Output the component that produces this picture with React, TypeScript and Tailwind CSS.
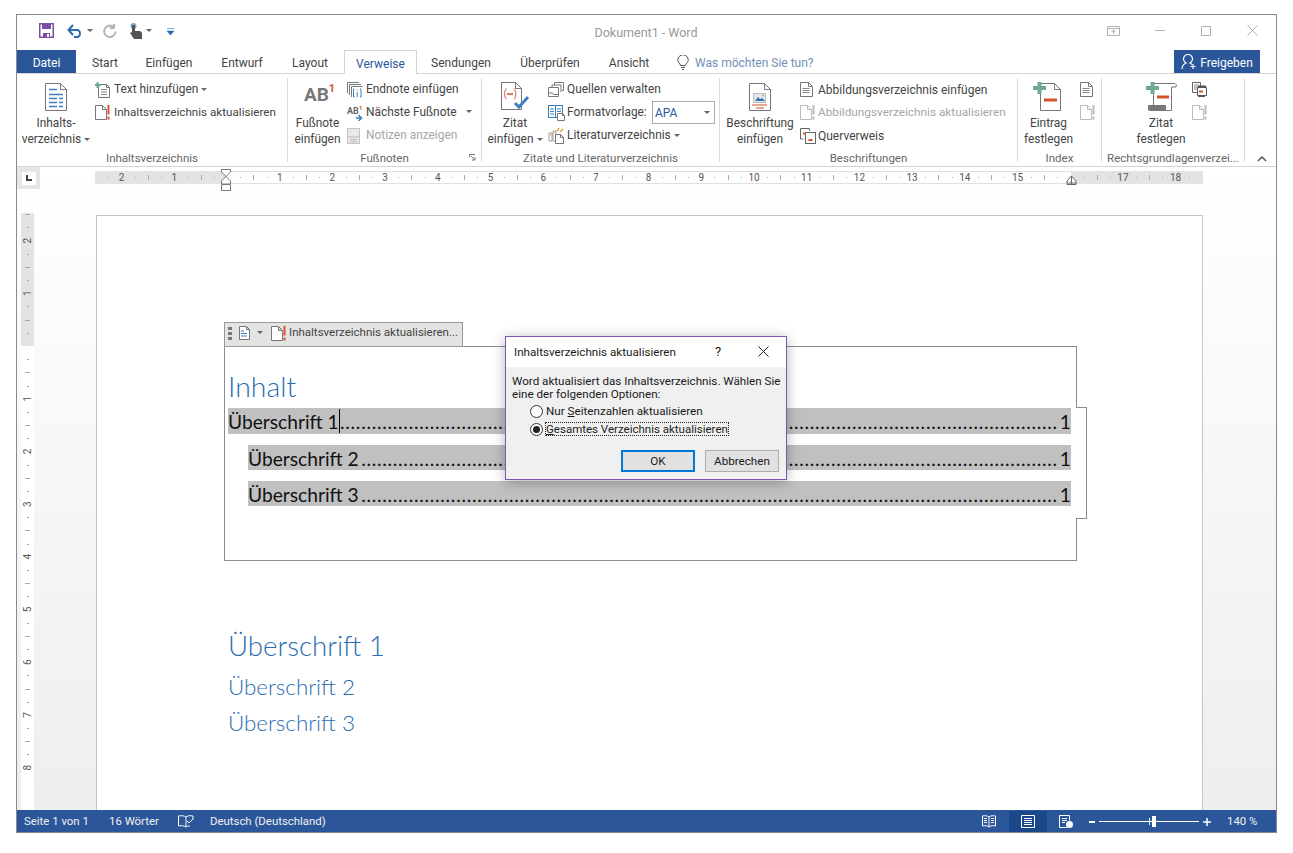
import { ReactNode } from "react";

const CM = 52.7;
const BLUE = "#3d7ebf";
const RED = "#d9512c";
const GREEN = "#6fa992";
const GRAY = "#777";

const Caret = ({ color = "#666" }: { color?: string }) => (
  <svg width="6" height="4" viewBox="0 0 6 4" className="ml-[3px] inline-block shrink-0 align-middle">
    <path d="M0 0h6L3 3z" fill={color} />
  </svg>
);

// page outline with folded corner, shared by most ribbon icons
const Page = ({ x = 0.5, y = 0.5, w, h, stroke = GRAY, fold = 5 }: { x?: number; y?: number; w: number; h: number; stroke?: string; fold?: number }) => (
  <path
    d={`M${x} ${y}h${w - fold}l${fold} ${fold}v${h - fold}h-${w}zM${x + w - fold} ${y}v${fold}h${fold}`}
    fill="#fff"
    stroke={stroke}
  />
);

const TocLarge = () => (
  <svg width="22" height="28" viewBox="0 0 22 28">
    <Page w={21} h={27} fold={6} />
    <path d="M4 6.5h8M4 11.5h14M4 15.5h8M14 15.5h4M4 19.5h8M14 19.5h4M4 23.5h8M14 23.5h4" stroke={BLUE} strokeWidth="1.4" />
  </svg>
);

const TextAdd = () => (
  <svg width="16" height="16" viewBox="0 0 16 16">
    <Page x={3.5} y={2.5} w={11} h={13} fold={3} />
    <path d="M6 7.5h6M6 10h6M6 12.5h6" stroke="#888" />
    <path d="M2.5 0v6M0 3h6" stroke={GREEN} strokeWidth="2" />
  </svg>
);

const UpdateIcon = ({ muted = false }: { muted?: boolean }) => (
  <svg width="16" height="15" viewBox="0 0 16 15">
    <Page w={11} h={14} fold={4} stroke={muted ? "#bbb" : GRAY} />
    <path d="M13.5 0v9.5M13.5 11.5v3" stroke={muted ? "#bbb" : RED} strokeWidth="2" />
  </svg>
);

const Endnote = () => (
  <svg width="16" height="16" viewBox="0 0 16 16">
    <path d="M.5 11V.5H12M2.5 13V2.500H14M4.500 15V4.500H15.500" fill="none" stroke="#777" />
    <path d="M7.500 7H6.500v8H7.500M13 7h1v8h-1M10.200 7.500v1M10.200 10v5" fill="none" stroke={BLUE} />
  </svg>
);

const NextNote = () => (
  <svg width="17" height="16" viewBox="0 0 17 16">
    <text x="0" y="9" fontSize="9" fontWeight="700" fill="#666" fontFamily="Roboto, sans-serif">AB</text>
    <text x="12" y="5" fontSize="6" fontWeight="700" fill={RED} fontFamily="Roboto, sans-serif">1</text>
    <path d="M9 13h5M11.500 10l3 3-3 3" fill="none" stroke={BLUE} strokeWidth="1.500" />
  </svg>
);

const NotesIcon = () => (
  <svg width="14" height="16" viewBox="0 0 14 16">
    <rect x=".5" y=".5" width="12" height="15" fill="#e8e8e8" stroke="#c4c4c4" />
    <path d="M.5 9h12M3 11.500h7M3 13.500h7" stroke="#bdbdbd" />
  </svg>
);

const CiteInsert = () => (
  <svg width="29" height="29" viewBox="0 0 29 29">
    <Page w={20} h={27} fold={6} />
    <text x="2.500" y="15" fontSize="10" fill={RED} fontFamily="Roboto, sans-serif">(</text>
    <text x="12.500" y="15" fontSize="10" fill={RED} fontFamily="Roboto, sans-serif">)</text>
    <path d="M6 12h6" stroke={RED} strokeWidth="1.500" />
    <path d="M14 21l4 4 9-10" fill="none" stroke="#3f7fc1" strokeWidth="3" />
  </svg>
);

const Sources = () => (
  <svg width="16" height="16" viewBox="0 0 16 16">
    <path d="M6.500 3V.5h9v8H14M4 5.500V3h9v7" fill="none" stroke="#777" />
    <path d="M.5 5.500h10v9H.5zM.5 11h4l1 1.500h5" fill="#fff" stroke="#777" />
  </svg>
);

const StyleIcon = () => (
  <svg width="17" height="16" viewBox="0 0 17 16">
    <rect x=".5" y=".5" width="14" height="12" fill="#fff" stroke={BLUE} />
    <path d="M7.500 1v11M2 4h4M2 6.500h4M2 9h4M9 4h4M9 6.500h4" stroke={BLUE} />
    <Page x={9.500} y={8.500} w={7} h={7} fold={2} />
  </svg>
);

const Biblio = () => (
  <svg width="16" height="16" viewBox="0 0 16 16">
    <path d="M1 5h3v8H1zM5 3h3v10H5z" fill="#fff" stroke="#888" strokeWidth=".8" />
    <path d="M9 3l2-3M12 4l3-3" stroke="#d8a640" strokeWidth="1.500" />
    <path d="M2 7h1M6 5h1" stroke="#d8a640" />
    <Page x={7.500} y={6.500} w={8} h={9} fold={3} />
  </svg>
);

const CaptionLarge = () => (
  <svg width="22" height="28" viewBox="0 0 22 28">
    <Page w={21} h={27} fold={6} />
    <rect x="4.500" y="10.500" width="12" height="9" fill="#dfe9f3" stroke="#bbb" />
    <path d="M6 18l3-4 2 2 2-1 3 3z" fill="#3c6ea8" />
    <circle cx="14" cy="12.500" r="1" fill="#e0a93b" />
    <path d="M3 22h15M7 25h8" stroke={RED} strokeWidth="1.200" />
  </svg>
);

const ListIcon = ({ stroke = GRAY }: { stroke?: string }) => (
  <svg width="13" height="15" viewBox="0 0 13 15">
    <Page w={12} h={14} fold={4} stroke={stroke} />
    <path d="M2.500 6.500h7M2.500 8.500h7M2.500 10.500h7" stroke="#888" />
  </svg>
);

const CrossRef = () => (
  <svg width="16" height="16" viewBox="0 0 16 16">
    <path d="M9.500 3V.5H.5V11h3" fill="none" stroke="#666" />
    <rect x="5.500" y="4.500" width="10" height="11" fill="#fff" stroke="#666" />
    <path d="M3 5.500h3M8.500 12h4" stroke={RED} strokeWidth="2" />
  </svg>
);

const EntryLarge = () => (
  <svg width="32" height="29" viewBox="0 0 32 29">
    <Page x={7.500} y={1.500} w={20} h={27} fold={6} />
    <path d="M6.500 0v12M0 6h13" stroke={GREEN} strokeWidth="4" />
    <path d="M11 18h13" stroke={RED} strokeWidth="3" />
  </svg>
);

const ScrollLarge = () => (
  <svg width="31" height="29" viewBox="0 0 31 29">
    <path d="M7.500 23V1.500H29a2.500 2.500 0 0 1 1 3.500h-4.500V28.500H14" fill="#fff" stroke={GRAY} />
    <path d="M2 23h18v4a2 2 0 0 1-2 2H4a2 2 0 0 1-2-2z" fill="#777" />
    <path d="M6.500 0v12M0 6h13" stroke={GREEN} strokeWidth="4" />
    <path d="M11 15h12" stroke={RED} strokeWidth="3" />
  </svg>
);

const CiteMark = () => (
  <svg width="15" height="15" viewBox="0 0 15 15">
    <path d="M.5.5h8v10H.5z" fill="#fff" stroke="#666" />
    <path d="M2 3h5M2 5h5M2 7h5" stroke="#888" />
    <path d="M5.500 5.500h9v8h-9z" fill="#fff" stroke="#555" />
    <path d="M6 3.500h8v2H6z" fill="#555" />
    <path d="M7 9.500h4" stroke={RED} strokeWidth="2" />
    <path d="M6 13h7v2H6z" fill="#555" />
  </svg>
);

const Large = ({ icon, lines, w, caret, className = "" }: { icon: ReactNode; lines: string[]; w: string; caret?: boolean; className?: string }) => (
  <div className={`flex shrink-0 flex-col items-center ${w} ${className}`}>
    <div className="flex h-[37px] items-center justify-center">{icon}</div>
    {lines.map((line, i) => (
      <div key={line} className="whitespace-nowrap text-center leading-[16px]">
        {line}
        {caret && i === lines.length - 1 && <Caret />}
      </div>
    ))}
  </div>
);

const Row = ({ icon, children, iconW, muted }: { icon: ReactNode; children: ReactNode; iconW: string; muted?: boolean }) => (
  <div className={`flex h-[23px] items-center whitespace-nowrap ${muted ? "text-[#a6a6a6]" : ""}`}>
    <div className={`flex shrink-0 items-center ${iconW}`}>{icon}</div>
    {children}
  </div>
);

const Group = ({ label, w, children }: { label: string; w: string; children: ReactNode }) => (
  <div className={`relative flex h-full shrink-0 flex-col border-r border-[#dadada] ${w}`}>
    <div className="flex h-[72px]">{children}</div>
    <div className="h-[12px] whitespace-nowrap text-center text-[11.500px] leading-[16px] text-[#666]">{label}</div>
  </div>
);

const TABS = [
  { label: "Start", cls: "w-[54px] ml-[2px]" },
  { label: "Einfügen", cls: "w-[74px]" },
  { label: "Entwurf", cls: "w-[72px]" },
  { label: "Layout", cls: "w-[64px] mr-[2px]" },
];

const TABS_AFTER = [
  { label: "Sendungen", cls: "w-[88px]" },
  { label: "Überprüfen", cls: "w-[90px]" },
  { label: "Ansicht", cls: "w-[68px]" },
];

const HorizontalRuler = () => {
  const nums = Array.from({ length: 21 }, (_, i) => i - 2).filter((n) => n !== 0 && n !== 16);
  const ticks = Array.from({ length: 84 }, (_, i) => i - 10).filter((t) => t % 4 !== 0);
  return (
    <svg width="1108" height="13" viewBox="0 0 1108 13" className="block">
      <rect width="1108" height="13" fill="#fff" />
      <path d="M132 .5H976M132 12.500H976" stroke="#e0e0e0" />
      <rect width="132" height="13" fill="#e3e3e3" />
      <rect x="976" width="132" height="13" fill="#e3e3e3" />
      {ticks
        .filter((t) => 132 + (t * CM) / 4 > 2 && 132 + (t * CM) / 4 < 1104)
        .map((t) => {
          const x = 132 + (t * CM) / 4;
          return Math.abs(t % 4) === 2 ? (
            <rect key={t} x={Math.round(x)} y="4" width="1" height="5" fill="#aaa" />
          ) : (
            <rect key={t} x={Math.round(x)} y="6" width="1" height="1" fill="#aaa" />
          );
        })}
      {nums.map((n) => (
        <text key={n} x={132 + n * CM} y="10" textAnchor="middle" fontSize="10" fill="#555" fontFamily="Roboto, sans-serif">
          {Math.abs(n)}
        </text>
      ))}
    </svg>
  );
};

const VerticalRuler = () => {
  const nums = [-2, -1, 1, 2, 3, 4, 5, 6, 7, 8];
  const ticks = Array.from({ length: 42 }, (_, i) => i - 10).filter((t) => t % 4 !== 0);
  return (
    <svg width="13" height="597" viewBox="0 0 13 597" className="block shrink-0">
      <rect width="13" height="597" fill="#fff" />
      <rect width="13" height="133" fill="#e3e3e3" />
      {ticks.map((t) => {
        const y = Math.round(133 + (t * CM) / 4);
        return Math.abs(t % 4) === 2 ? (
          <rect key={t} x="4" y={y} width="5" height="1" fill="#aaa" />
        ) : (
          <rect key={t} x="6" y={y} width="2" height="1" fill="#aaa" />
        );
      })}
      {nums.map((n) => {
        const y = 133 + n * CM;
        return (
          <text key={n} x="6.500" y={y + 3.500} textAnchor="middle" fontSize="10" fill="#555" fontFamily="Roboto, sans-serif" transform={`rotate(-90 6.500 ${y})`}>
            {Math.abs(n)}
          </text>
        );
      })}
    </svg>
  );
};

const TocRow = ({ label, cls, cursor, dots }: { label: string; cls: string; cursor?: boolean; dots: number }) => (
  <div className={`flex items-center whitespace-nowrap bg-[#c0c0c0] pt-[3px] text-[19.200px] text-[#111] ${cls}`}>
    <span>{label}</span>
    {cursor && <span className="mt-[-3px] h-[24px] w-px bg-black" />}
    <span className="min-w-0 flex-1 text-right tracking-[0.750px]">{".".repeat(dots)}</span>
    <span className="pl-[2px]">1</span>
  </div>
);

export default function App() {
  return (
    <div className="relative h-[853px] w-[1293px] overflow-hidden bg-white pl-[16px] pt-[14px] font-['Roboto',sans-serif] text-[11.900px] text-[#444]">
      <div className="flex h-[819px] w-[1261px] flex-col border border-[#8a8a8a] bg-white">
        {/* Title bar */}
        <div className="flex h-[35px] shrink-0 items-center">
          <div className="mt-[-4px] flex w-[500px] items-center">
            <svg width="15" height="15" viewBox="0 0 15 15" className="ml-[22px]">
              <path d="M.75.75h13.500v13.500H.75z" fill="#fff" stroke="#7b4fa3" strokeWidth="1.500" />
              <path d="M3 1h9v5H3zM4 10h7v4H4z" fill="#7b4fa3" />
              <path d="M8 11h2v3H8z" fill="#fff" />
            </svg>
            <svg width="17" height="14" viewBox="0 0 17 14" className="ml-[13px]">
              <path d="M2 6h9a4 4 0 0 1 0 7H7M6 1L1.500 6 6 11" fill="none" stroke="#2b6cb0" strokeWidth="2" />
            </svg>
            <Caret />
            <svg width="16" height="16" viewBox="0 0 16 16" className="ml-[9px]">
              <path d="M13.500 8.500a5.700 5.700 0 1 1-2-4.500M12 1v4H8" fill="none" stroke="#b5b5b5" strokeWidth="2" />
            </svg>
            <svg width="15" height="18" viewBox="0 0 15 18" className="ml-[10px]">
              <circle cx="5.500" cy="4" r="3" fill="#7fa9d4" />
              <path d="M4 3h3v6h4a3 3 0 0 1 3 3v5H6L2 11l2-1z" fill="#555" />
            </svg>
            <Caret />
            <svg width="7" height="8" viewBox="0 0 7 8" className="ml-[15px] mt-[2px]">
              <path d="M0 .5h7M0 3h7l-3.500 4z" fill="#2b6cb0" stroke="#2b6cb0" strokeWidth=".6" />
            </svg>
          </div>
          <div className="mt-[2px] w-[258px] text-center text-[12.500px] text-[#999]">Dokument1 - Word</div>
          <div className="ml-auto mt-[-4px] flex items-center">
            <svg width="13" height="10" viewBox="0 0 13 10" className="mr-[35px]">
              <path d="M.5.500h12v9H.5zM.5 2.500h12M6.500 8V4M4.500 6l2-2 2 2" fill="none" stroke="#b0b0b0" />
            </svg>
            <svg width="10" height="1" viewBox="0 0 10 1" className="mr-[36px]">
              <path d="M0 .5h10" stroke="#b0b0b0" />
            </svg>
            <svg width="10" height="10" viewBox="0 0 10 10" className="mr-[36px]">
              <path d="M.5.500h9v9h-9z" fill="none" stroke="#b0b0b0" />
            </svg>
            <svg width="11" height="11" viewBox="0 0 11 11" className="mr-[18px]">
              <path d="M.5.500l10 10M10.500.500l-10 10" stroke="#b0b0b0" />
            </svg>
          </div>
        </div>

        {/* Tabs */}
        <div className="flex h-[24px] shrink-0 items-stretch border-b border-[#d4d4d4] text-[12px] leading-[26px] text-[#444]">
          <div className="w-[59px] bg-[#2b579a] text-center text-white">Datei</div>
          {TABS.map((t) => (
            <div key={t.label} className={`text-center ${t.cls}`}>{t.label}</div>
          ))}
          <div className="z-10 -mb-px h-[24px] w-[73px] border-x border-t border-[#d4d4d4] bg-white text-center text-[#2b579a]">Verweise</div>
          {TABS_AFTER.map((t) => (
            <div key={t.label} className={`text-center ${t.cls}`}>{t.label}</div>
          ))}
          <div className="ml-[14px] flex items-center pt-[2px] text-[#6f8fb8]">
            <svg width="12" height="15" viewBox="0 0 12 15" className="mr-[6px]">
              <path d="M3.500 10.500C3 8 .8 7.500.8 5a5.200 5.200 0 0 1 10.400 0c0 2.500-2.200 3-2.700 5.500zM4 12.500h4M5 14.500h2" fill="none" stroke="#555" />
            </svg>
            Was möchten Sie tun?
          </div>
          <div className="ml-auto mr-[16px] flex w-[86px] items-center justify-center bg-[#2b579a] pt-[2px] text-white">
            <svg width="16" height="16" viewBox="0 0 16 16" className="mr-[3px] mt-[-2px]">
              <path d="M1 15c0-3 2-5 4-6a4.500 4.500 0 1 1 4 0c1 .5 1.500 1 2 1.500M12 10v5M9.500 12.500h5" fill="none" stroke="#fff" strokeWidth="1.200" />
            </svg>
            Freigeben
          </div>
        </div>

        {/* Ribbon */}
        <div className="relative flex h-[93px] shrink-0 border-b border-[#d4d4d4] pb-[4px] pt-[4px]">
          <Group label="Inhaltsverzeichnis" w="w-[271px]">
            <Large icon={<TocLarge />} lines={["Inhalts-", "verzeichnis"]} caret w="w-[78px]" />
            <div>
              <Row icon={<TextAdd />} iconW="w-[19px]">Text hinzufügen<Caret /></Row>
              <Row icon={<UpdateIcon />} iconW="w-[19px]"><span className="text-[11.650px]">Inhaltsverzeichnis aktualisieren</span></Row>
            </div>
          </Group>
          <Group label="Fußnoten" w="w-[194px]">
            <Large
              w="w-[59px]"
              lines={["Fußnote", "einfügen"]}
              icon={
                <span className="ml-[4px] mt-[-3px] flex items-start font-bold text-[#777]">
                  <span className="text-[19px] leading-[24px]">AB</span>
                  <span className="text-[11px] leading-[12px] text-[#d9512c]">1</span>
                </span>
              }
            />
            <div>
              <Row icon={<Endnote />} iconW="w-[19px]">Endnote einfügen</Row>
              <Row icon={<NextNote />} iconW="w-[19px]">
                Nächste Fußnote
                <span className="ml-[6px]"><Caret /></span>
              </Row>
              <Row icon={<NotesIcon />} iconW="w-[19px]" muted>Notizen anzeigen</Row>
            </div>
            <svg width="7" height="7" viewBox="0 0 7 7" className="absolute bottom-[1px] right-[5px]">
              <path d="M.5 3V.5H6M2 2l4 4M6 3v3H3" fill="none" stroke="#777" />
            </svg>
          </Group>
          <Group label="Zitate und Literaturverzeichnis" w="w-[238px]">
            <Large icon={<CiteInsert />} lines={["Zitat", "einfügen"]} caret w="w-[66px]" />
            <div>
              <Row icon={<Sources />} iconW="w-[19px]">Quellen verwalten</Row>
              <Row icon={<StyleIcon />} iconW="w-[19px]">
                <span className="w-[85px]">Formatvorlage:</span>
                <div className="flex h-[23px] w-[63px] items-center justify-between border border-[#ababab] pl-[2px] pr-[4px] text-[12px] text-[#2b579a]">
                  APA
                  <Caret />
                </div>
              </Row>
              <Row icon={<Biblio />} iconW="w-[19px]">Literaturverzeichnis<Caret /></Row>
            </div>
          </Group>
          <Group label="Beschriftungen" w="w-[298px]">
            <Large icon={<CaptionLarge />} lines={["Beschriftung", "einfügen"]} w="w-[80px]" />
            <div className="text-[12px]">
              <Row icon={<ListIcon />} iconW="w-[18px]">Abbildungsverzeichnis einfügen</Row>
              <Row icon={<UpdateIcon muted />} iconW="w-[18px]" muted><span className="text-[11.800px]">Abbildungsverzeichnis aktualisieren</span></Row>
              <Row icon={<CrossRef />} iconW="w-[18px]">Querverweis</Row>
            </div>
          </Group>
          <Group label="Index" w="w-[84px]">
            <Large icon={<EntryLarge />} lines={["Eintrag", "festlegen"]} w="w-[61px]" />
            <div className="ml-[1px]">
              <div className="flex h-[23px] items-center"><ListIcon /></div>
              <div className="flex h-[23px] items-center"><UpdateIcon muted /></div>
            </div>
          </Group>
          <Group label="Rechtsgrundlagenverzei..." w="w-[143px]">
            <Large icon={<ScrollLarge />} lines={["Zitat", "festlegen"]} w="w-[62px]" className="ml-[28px]" />
            <div>
              <div className="flex h-[23px] items-center"><CiteMark /></div>
              <div className="flex h-[23px] items-center"><UpdateIcon muted /></div>
            </div>
          </Group>
          <svg width="10" height="6" viewBox="0 0 10 6" className="ml-[12px] mt-[78px]">
            <path d="M1 5l4-4 4 4" fill="none" stroke="#555" strokeWidth="1.500" />
          </svg>
        </div>

        {/* Document area */}
        <div className="flex min-h-0 flex-1 flex-col overflow-hidden bg-gradient-to-b from-white to-[#eeeeee]">
          <div className="relative flex h-[46px] shrink-0 items-start">
            <div className="flex h-[22px] w-[23px] items-center justify-center bg-[#e6e6e6]">
              <div className="flex h-[13px] w-[14px] items-center justify-center bg-white">
                <div className="h-[6px] w-[6px] border-b-2 border-l-2 border-[#444]" />
              </div>
            </div>
            <div className="ml-[55px] mt-[4px]">
              <HorizontalRuler />
            </div>
            <svg width="12" height="22" viewBox="0 0 12 22" className="absolute left-[204px] top-[2px]">
              <path d="M.5.500h9v2.500L5 7.500 .5 3zM5 7.500l4.500 4.500v3h-9v-3z" fill="#fff" stroke="#777" />
              <path d="M.5 15.500h9v6h-9z" fill="#fff" stroke="#777" />
            </svg>
            <svg width="12" height="10" viewBox="0 0 12 10" className="absolute left-[1049px] top-[8px]">
              <path d="M1 9.500V6l4.500-5L10 6v3.500z" fill="#fff" stroke="#666" />
              <path d="M5.500 1v8.500M1 8h9" stroke="#666" />
            </svg>
          </div>
          <div className="flex min-h-0 flex-1 items-start">
            <div className="ml-[4px]">
              <VerticalRuler />
            </div>
            <div className="ml-[62px] mt-[2px] h-[700px] w-[1107px] shrink-0 border-x border-t border-[#c6c6c6] bg-white pl-[127px] pt-[130px] font-['Lato',sans-serif]">
              <div className="relative h-[215px] w-[853px] border border-[#8c8c8c] pl-[3px] pr-[5px]">
                {/* Content control tab */}
                <div className="absolute left-[-1px] top-[-25px] flex h-[25px] w-[239px] items-center border border-[#9a9a9a] bg-[#e3e3e3] pb-[3px] font-['Roboto',sans-serif] text-[11.500px] text-[#444]">
                  <svg width="5" height="13" viewBox="0 0 5 13" className="ml-[3px]">
                    <path d="M0 0h4v3H0zM0 5h4v3H0zM0 10h4v3H0z" fill="#777" />
                  </svg>
                  <svg width="11" height="14" viewBox="0 0 11 14" className="ml-[6px]">
                    <Page w={10} h={13} fold={3} />
                    <path d="M2 5h3M2 7.500h6M2 10h6" stroke={BLUE} />
                  </svg>
                  <span className="ml-[4px]"><Caret /></span>
                  <div className="ml-[8px] mr-[2px] flex">
                    <UpdateIcon />
                  </div>
                  Inhaltsverzeichnis aktualisieren...
                </div>
                {/* Side handle */}
                <div className="absolute right-[-11px] top-[60px] h-[112px] w-[11px] border-y border-r border-[#8c8c8c] bg-white" />
                <div className="flex h-[61px] items-end pb-[5px] text-[28.400px] font-light leading-[34px] text-[#2a6cb0]">Inhalt</div>
                <TocRow label="Überschrift 1" cls="h-[26px]" cursor dots={136} />
                <TocRow label="Überschrift 2" cls="mt-[11px] h-[25px] ml-[20px]" dots={132} />
                <TocRow label="Überschrift 3" cls="mt-[11px] h-[25px] ml-[20px]" dots={132} />
              </div>
              <div className="ml-[4px] mt-[66px] text-[27.700px] font-light leading-[38px] text-[#2a6cb0]">Überschrift 1</div>
              <div className="ml-[4px] mt-[6px] text-[22.400px] font-light leading-[32px] text-[#2a6cb0]">Überschrift 2</div>
              <div className="ml-[4px] mt-[4px] text-[22.400px] font-light leading-[32px] text-[#2a6cb0]">Überschrift 3</div>
            </div>
          </div>
        </div>

        {/* Status bar */}
        <div className="flex h-[22px] shrink-0 items-center bg-[#2b579a] pt-px text-[11.400px] text-[#f0f0f0]">
          <span className="ml-[7px] w-[85px]">Seite 1 von 1</span>
          <span className="w-[69px]">16 Wörter</span>
          <svg width="16" height="13" viewBox="0 0 16 13">
            <path d="M8 2C6 .5 3 .5 .5 1v10c3-.5 5-.5 7.500 1V2M8 2c2-1.500 4-1.500 7-1v3M8 12c1-.7 2-1 4-1" fill="none" stroke="#fff" />
            <path d="M9 6l2 2 4-4" fill="none" stroke="#fff" />
          </svg>
          <span className="ml-[16px]">Deutsch (Deutschland)</span>
          <div className="ml-auto flex h-full items-center">
            <svg width="14" height="13" viewBox="0 0 14 13" className="mr-[13px]">
              <path d="M7 2C5 .5 3 .5.500 1v10C3 10.500 5 10.500 7 12c2-1.500 4-1.500 6.500-1V1C11 .5 9 .5 7 2zM7 2v10M2 3.500h3M2 5.500h3M2 7.500h3M9 3.500h3M9 5.500h3M9 7.500h3" fill="none" stroke="#fff" />
            </svg>
            <div className="flex h-full w-[38px] items-center justify-center bg-[#19478a]">
              <svg width="14" height="13" viewBox="0 0 14 13">
                <path d="M.5.500h13v12H.5zM3 3.500h8M3 5.500h8M3 7.500h8M3 9.500h8" fill="none" stroke="#fff" />
              </svg>
            </div>
            <svg width="14" height="13" viewBox="0 0 14 13" className="ml-[12px]">
              <path d="M8 12.500H.5V.500h10v5M3 3.500h5M3 5.500h5M3 7.500h3" fill="none" stroke="#fff" />
              <circle cx="10.500" cy="9.500" r="3.500" fill="#fff" />
            </svg>
            <div className="ml-[16px] h-[2px] w-[6px] bg-white" />
            <div className="relative ml-[4px] h-px w-[100px] bg-white">
              <div className="absolute left-[50px] top-[-3px] h-[7px] w-px bg-white" />
              <div className="absolute left-[53px] top-[-5px] h-[11px] w-[4px] bg-white" />
            </div>
            <svg width="8" height="8" viewBox="0 0 8 8" className="ml-[4px]">
              <path d="M4 0v8M0 4h8" stroke="#fff" strokeWidth="1.500" />
            </svg>
            <span className="ml-[16px] mr-[19px] w-[30px] whitespace-nowrap">140 %</span>
          </div>
        </div>
      </div>

      {/* Update dialog */}
      <div className="absolute left-[505px] top-[336px] h-[144px] w-[282px] border border-[#7e57b5] bg-[#f0f0f0] text-[11.650px] leading-[13px] text-[#1a1a1a] shadow-[0_2px_12px_rgba(0,0,0,0.3)]">
        <div className="flex h-[30px] items-center bg-white pl-[8px]">
          <span>Inhaltsverzeichnis aktualisieren</span>
          <span className="absolute left-[209px] top-[8px] text-[13px]">?</span>
          <svg width="11" height="11" viewBox="0 0 11 11" className="absolute left-[252px] top-[9px]">
            <path d="M.5.500l10 10M10.500.500l-10 10" stroke="#222" />
          </svg>
        </div>
        <div className="pl-[6px] pt-[8px]">
          <div className="whitespace-nowrap">Word aktualisiert das Inhaltsverzeichnis. Wählen Sie</div>
          <div>eine der folgenden Optionen:</div>
          <div className="ml-[18px] mt-[1px] flex h-[18px] items-center">
            <span className="h-[13px] w-[13px] rounded-full border border-[#333] bg-white" />
            <span className="ml-[3px]">Nur <span className="underline">S</span>eitenzahlen aktualisieren</span>
          </div>
          <div className="ml-[18px] flex h-[18px] items-center">
            <span className="flex h-[13px] w-[13px] items-center justify-center rounded-full border border-[#333] bg-white">
              <span className="h-[7px] w-[7px] rounded-full bg-[#222]" />
            </span>
            <span className="ml-[2px] border border-dotted border-[#222] text-[11.500px] leading-[12px]"><span className="underline">G</span>esamtes Verzeichnis aktualisieren</span>
          </div>
          <div className="mt-[12px] flex justify-end gap-[10px] pr-[7px]">
            <div className="flex h-[22px] w-[74px] items-center justify-center border-2 border-[#0078d7] bg-[#e1e1e1]">OK</div>
            <div className="flex h-[22px] w-[74px] items-center justify-center border border-[#adadad] bg-[#e1e1e1]">Abbrechen</div>
          </div>
        </div>
      </div>
    </div>
  );
}
